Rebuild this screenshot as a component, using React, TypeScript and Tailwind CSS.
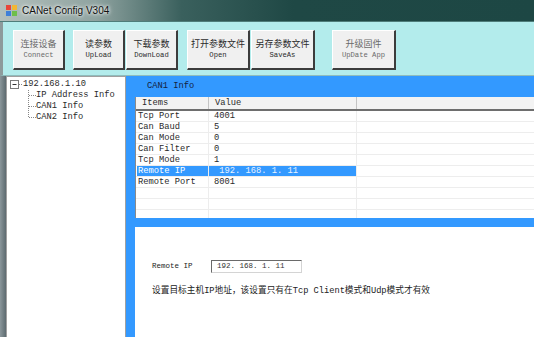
import React from "react";

const mono = "font-['Liberation_Mono','Noto_Sans_CJK_SC',monospace]";

interface ToolButton {
    cn: string;
    en: string;
    w: string;
    ml: string;
    dim?: boolean;
}

const buttons: ToolButton[] = [
    { cn: "连接设备", en: "Connect", w: "w-[52px]", ml: "ml-0", dim: true },
    { cn: "读参数", en: "UpLoad", w: "w-[52px]", ml: "ml-[8px]" },
    { cn: "下载参数", en: "DownLoad", w: "w-[52px]", ml: "ml-[1px]" },
    { cn: "打开参数文件", en: "Open", w: "w-[63px]", ml: "ml-[9px]" },
    { cn: "另存参数文件", en: "SaveAs", w: "w-[64px]", ml: "ml-[1px]" },
    { cn: "升级固件", en: "UpDate App", w: "w-[64px]", ml: "ml-[17px]", dim: true },
];

const rows: { item: string; value: string; selected?: boolean }[] = [
    { item: "Tcp Port", value: "4001" },
    { item: "Can Baud", value: "5" },
    { item: "Can Mode", value: "0" },
    { item: "Can Filter", value: "0" },
    { item: "Tcp Mode", value: "1" },
    { item: "Remote IP", value: " 192. 168. 1. 11", selected: true },
    { item: "Remote Port", value: "8001" },
    { item: "", value: "" },
    { item: "", value: "" },
    { item: "", value: "" },
];

const AppIcon = () => (
    <svg width="11" height="11" viewBox="0 0 11 11">
        <rect x="0" y="0" width="5" height="5" fill="#e8463a" />
        <rect x="6" y="0" width="5" height="5" fill="#f2b632" />
        <rect x="0" y="6" width="5" height="5" fill="#3f7fd8" />
        <rect x="6" y="6" width="5" height="5" fill="#6fbf4a" />
    </svg>
);

export default function App() {
    return (
        <div className="w-[534px] h-[337px] overflow-hidden flex flex-col bg-[#b3ecec] font-['Liberation_Sans','Noto_Sans_CJK_SC',sans-serif]">
            {/* title bar */}
            <div className="h-[22px] shrink-0 flex items-center pl-[6px] gap-[5px] bg-[linear-gradient(90deg,#b3bfbc_0%,#8fa3a0_18%,#3a605d_34%,#1f4845_55%,#1d4744_100%)] border-b border-[#4f7d7a]">
                <AppIcon />
                <span className="text-[10px] text-[#111] [text-shadow:0_0_5px_#fff,0_0_3px_#fff]">CANet Config V304</span>
            </div>

            {/* toolbar */}
            <div className="h-[54px] shrink-0 flex items-start pt-[8px] pl-[10px] border-l-[3px] border-[#8d9b9c] border-b border-b-[#8fbcbc]">
                {buttons.map((b, i) => (
                    <div
                        key={i}
                        className={`${b.w} ${b.ml} h-[40px] flex flex-col items-center justify-center gap-[1px] bg-[#f0f0f0] border-t border-l border-white border-r-2 border-b-2 border-r-[#3c3c3c] border-b-[#3c3c3c] ${b.dim ? "text-[#6a6a6a]" : "text-[#2a2a2a]"}`}
                    >
                        <span className="text-[9px] leading-[11px]">{b.cn}</span>
                        <span className={`${mono} text-[7.2px] leading-[9px]`}>{b.en}</span>
                    </div>
                ))}
            </div>

            {/* main */}
            <div className="flex-1 flex min-h-0">
                <div className="w-[6px] bg-[linear-gradient(90deg,#8a969a,#5d6b70)]" />

                {/* tree */}
                <div className={`w-[120px] bg-white border-l border-t border-r border-[#a0a0a0] pt-[2px] ${mono} text-[8.75px] text-[#2a2a2a]`}>
                    <div className="h-[11px] flex items-center pl-[3px]">
                        <svg width="12" height="11" viewBox="0 0 12 11">
                            <rect x="0.5" y="1.5" width="8" height="8" fill="#fff" stroke="#7a7a7a" />
                            <line x1="2.5" y1="5.5" x2="6.5" y2="5.5" stroke="#333" />
                            <line x1="9" y1="5.5" x2="12" y2="5.5" stroke="#888" strokeDasharray="1 1" />
                        </svg>
                        <span className="ml-[1px]">192.168.1.10</span>
                    </div>
                    <div className="flex">
                        <svg width="29" height="34" viewBox="0 0 29 34" className="shrink-0">
                            <line x1="21.5" y1="0" x2="21.5" y2="28" stroke="#888" strokeDasharray="1 1" />
                            <line x1="22" y1="5.5" x2="29" y2="5.5" stroke="#888" strokeDasharray="1 1" />
                            <line x1="22" y1="16.5" x2="29" y2="16.5" stroke="#888" strokeDasharray="1 1" />
                            <line x1="22" y1="27.5" x2="29" y2="27.5" stroke="#888" strokeDasharray="1 1" />
                        </svg>
                        <div className="flex flex-col">
                            <span className="h-[11px] leading-[11px]">IP Address Info</span>
                            <span className="h-[11px] leading-[11px]">CAN1 Info</span>
                            <span className="h-[11px] leading-[11px]">CAN2 Info</span>
                        </div>
                    </div>
                </div>

                {/* right panel */}
                <div className="flex-1 flex flex-col bg-[#3399ff] pl-[9px]">
                    <div className={`h-[21px] shrink-0 flex items-center pl-[12px] ${mono} text-[8.75px] text-[#14223e]`}>CAN1 Info</div>

                    <div className={`h-[121px] shrink-0 bg-white border-l border-[#8a8a8a] overflow-hidden ${mono} text-[8.75px] text-[#2a2a2a]`}>
                        <div className="grid grid-cols-[73px_148px_1fr] h-[14px] bg-[#f3f3f3] border-b-2 border-[#6e6e6e]">
                            <div className="pl-[6px] leading-[12px] border-r border-[#c4c4c4]">Items</div>
                            <div className="pl-[6px] leading-[12px] border-r border-[#c4c4c4]">Value</div>
                            <div />
                        </div>
                        {rows.map((r, i) => (
                            <div key={i} className="grid grid-cols-[73px_148px_1fr] h-[11px] border-b border-[#ededed]">
                                <div className={`ml-[1px] pl-[1px] leading-[10px] border-r border-[#ededed] whitespace-pre ${r.selected ? "bg-[#3399ff] text-white" : ""}`}>{r.item}</div>
                                <div className={`pl-[5px] leading-[10px] border-r border-[#ededed] whitespace-pre ${r.selected ? "bg-[#3399ff] text-[#e8f2ff]" : ""}`}>{r.value}</div>
                                <div />
                            </div>
                        ))}
                    </div>

                    <div className="h-[9px] shrink-0" />

                    <div className="flex-1 bg-white pl-[17px] pt-[33px]">
                        <div className="flex items-center">
                            <span className={`${mono} text-[7.5px] text-[#222] w-[59px]`}>Remote IP</span>
                            <div className={`w-[91px] h-[13px] flex items-center pl-[5px] border border-t-[#6a6a6a] border-l-[#6a6a6a] border-r-[#d4d4d4] border-b-[#d4d4d4] ${mono} text-[7.5px] text-[#333] whitespace-pre`}>
                                192. 168. 1. 11
                            </div>
                        </div>
                        <div className={`mt-[13px] ${mono} text-[8.7px] leading-[11px] text-[#222]`}>
                            设置目标主机IP地址，该设置只有在Tcp Client模式和Udp模式才有效
                        </div>
                    </div>
                </div>
            </div>
        </div>
    );
}
